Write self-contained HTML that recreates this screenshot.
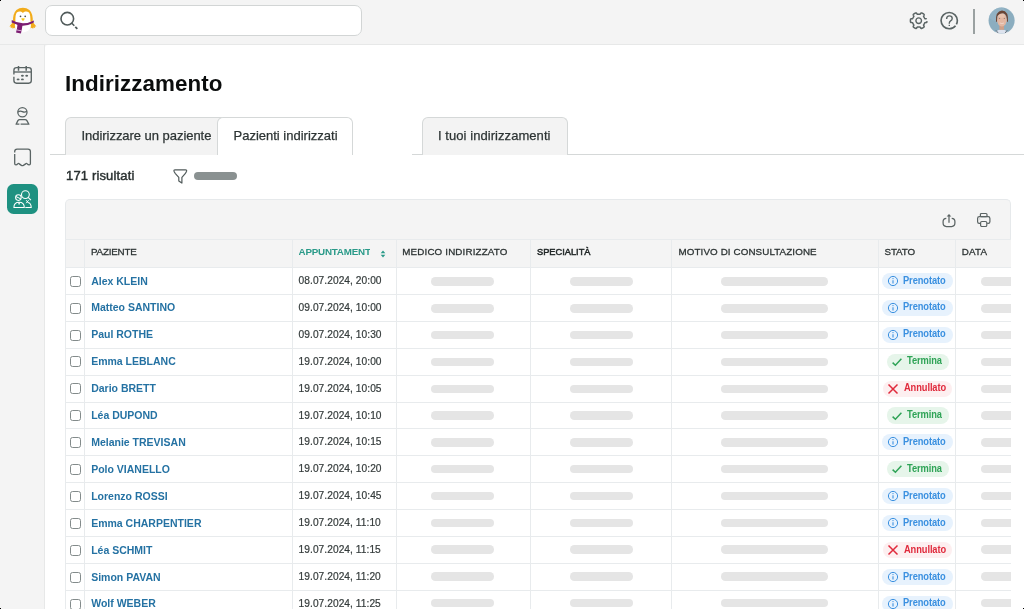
<!DOCTYPE html>
<html><head><meta charset="utf-8"><style>
*{box-sizing:border-box;margin:0;padding:0}
html,body{width:1024px;height:609px;overflow:hidden;background:#f4f4f4;font-family:"Liberation Sans",sans-serif;}
.a{position:absolute}
.t{position:absolute;white-space:nowrap;line-height:1}
</style></head>
<body><div class="a" style="left:0;top:0;width:1024px;height:609px;overflow:hidden;will-change:transform">
<div class="a" style="left:0;top:44px;width:1024px;height:1px;background:#e7e8e8"></div>
<div class="a" style="left:44px;top:44px;width:1px;height:565px;background:#e7e8e8"></div>
<div class="a" style="left:45px;top:45px;width:979px;height:564px;background:#fff;border-top-left-radius:3px"></div>
<svg class="a" style="left:0;top:0" width="46" height="44" viewBox="0 0 46 44">
<path d="M14.2 20.6 L9.4 26.4 L11.0 26.6 L10.6 28.0 L12.4 27.4 L12.6 28.8 L14.2 27.8 L15.2 28.6 L15.8 22.4 Z" fill="#f2ac1b"/>
<path d="M31.6 20.6 L36.4 26.4 L34.8 26.6 L35.2 28.0 L33.4 27.4 L33.2 28.8 L31.6 27.8 L30.6 28.6 L30.0 22.4 Z" fill="#f2ac1b"/>
<ellipse cx="22.9" cy="25.4" rx="8.0" ry="7.0" fill="#fff"/>
<path d="M13.0 21.6 Q12.8 13.4 16.4 10.0 Q19.2 7.8 22.9 7.8 Q26.6 7.8 29.4 10.0 Q33.0 13.4 32.8 21.6 Z" fill="#f2ac1b"/>
<path d="M15.4 23.5 Q15.0 14.6 16.8 12.6 Q18.6 11.2 20.4 11.6 Q22.0 12.0 22.9 13.0 Q23.8 12.0 25.4 11.6 Q27.2 11.2 29.0 12.6 Q30.8 14.6 30.4 23.5 Z" fill="#fff"/>
<circle cx="20.5" cy="16.3" r="0.85" fill="#4a4a4a"/>
<circle cx="25.2" cy="16.3" r="0.85" fill="#4a4a4a"/>
<path d="M21.1 18.6 Q23 17.9 24.9 18.6 Q24.2 20.6 23 20.9 Q21.8 20.6 21.1 18.6 Z" fill="#f5c518"/>
<path d="M11.8 20.0 Q17 23.2 22.9 23.2 Q28.6 23.2 34.0 20.4 L33.6 22.8 Q28.4 25.6 22.9 25.8 Q17.4 25.6 11.6 22.6 Z" fill="#7c1d72"/>
<path d="M17.6 23.6 L22.6 24.4 L21.8 29.4 L20.9 33.6 L16.0 32.4 L17.0 28.6 Z" fill="#7c1d72"/>
<path d="M16.7 29.4 L21.6 30.4 L21.4 31.2 L16.5 30.2 Z" fill="#e9c8e4"/>
</svg>

<div class="a" style="left:45px;top:5px;width:317px;height:31px;border:1px solid #d2d5d5;border-radius:7px;background:#fff"></div>
<svg class="a" style="left:58px;top:10px" width="22" height="22" viewBox="0 0 22 22"><circle cx="9.3" cy="8.7" r="6.3" fill="none" stroke="#505a5a" stroke-width="1.6"/><path d="M13.8 13.3 L16.3 15.8" stroke="#505a5a" stroke-width="1.6"/><path d="M17.3 16.8 L19.3 18.8" stroke="#505a5a" stroke-width="1.8"/></svg>
<div class="t" style="left:65px;top:73.2px;font-size:22.4px;letter-spacing:0.05px;font-weight:700;color:#0b0d0d">Indirizzamento</div>
<div class="a" style="left:49.5px;top:154px;width:168px;height:1px;background:#d5d8d8"></div>
<div class="a" style="left:412px;top:154px;width:612px;height:1px;background:#d5d8d8"></div>
<div class="a" style="left:65px;top:117px;width:162px;height:37.5px;background:#f3f3f3;border:1px solid #d5d8d8;border-bottom:none;border-radius:6px 6px 0 0"></div>
<div class="a" style="left:217px;top:117px;width:136px;height:37.5px;background:#fff;border:1px solid #d5d8d8;border-bottom:none;border-radius:6px 6px 0 0"></div>
<div class="a" style="left:421.5px;top:117px;width:146.5px;height:37.5px;background:#f3f3f3;border:1px solid #d5d8d8;border-bottom:none;border-radius:6px 6px 0 0"></div>
<div class="t" style="left:81.5px;top:128.5px;font-size:13px;color:#2d3434;-webkit-text-stroke:0.25px #2d3434;letter-spacing:-0.04px">Indirizzare un paziente</div>
<div class="t" style="left:233.5px;top:128.5px;font-size:13px;color:#2d3434;-webkit-text-stroke:0.25px #2d3434">Pazienti indirizzati</div>
<div class="t" style="left:438px;top:128.5px;font-size:13px;color:#2d3434;-webkit-text-stroke:0.25px #2d3434;letter-spacing:0.06px">I tuoi indirizzamenti</div>
<div class="t" style="left:66px;top:168.8px;font-size:13px;font-weight:400;color:#2a3131;-webkit-text-stroke:0.45px #2a3131;letter-spacing:0.15px">171 risultati</div>
<svg class="a" style="left:172px;top:168px" width="17" height="17" viewBox="0 0 17 17"><path d="M3 1.9 H13.5 Q14.9 1.9 14.6 3.2 Q14.3 4.3 13.2 5.6 L9.9 9.4 V15.1 L6.8 12.9 V9.4 L3.4 5.6 Q2.3 4.3 2.0 3.2 Q1.7 1.9 3 1.9 Z" fill="none" stroke="#505a5a" stroke-width="1.2" stroke-linejoin="round"/></svg>
<div class="a" style="left:194.2px;top:172px;width:42.8px;height:8px;border-radius:4px;background:#8a9191"></div>
<div class="a" style="left:65px;top:199px;width:946px;height:40.5px;background:#f4f4f4;border:1px solid #e6e9eb;border-bottom:none;border-radius:5px 5px 0 0"></div>
<div class="a" style="left:65px;top:239.5px;width:946px;height:28.0px;background:#f4f4f4"></div>
<svg class="a" style="left:941px;top:212px" width="16" height="16" viewBox="0 0 16 16"><path d="M5.3 6.3 Q2.1 6.5 2.1 9.6 V11.1 Q2.1 14.5 5.4 14.5 H10.6 Q13.9 14.5 13.9 11.1 V9.6 Q13.9 6.5 10.7 6.3" fill="none" stroke="#5a6363" stroke-width="1.25"/><path d="M8 10.8 V3" stroke="#5a6363" stroke-width="1.25"/><path d="M5.7 4.6 L8 2 L10.3 4.6 Z" fill="#5a6363"/></svg>
<svg class="a" style="left:976px;top:212px" width="16" height="16" viewBox="0 0 16 16"><rect x="4.4" y="1.5" width="6.6" height="3.2" rx="1" fill="none" stroke="#5a6363" stroke-width="1.2"/><path d="M4.2 11.3 H3.2 Q1.6 11.3 1.6 9.7 V6.4 Q1.6 4.7 3.4 4.7 H12.1 Q13.9 4.7 13.9 6.4 V9.7 Q13.9 11.3 12.3 11.3 H11.2" fill="none" stroke="#5a6363" stroke-width="1.2"/><rect x="4.6" y="9.5" width="6.2" height="5" rx="1.3" fill="none" stroke="#5a6363" stroke-width="1.2"/><circle cx="3.8" cy="6.9" r="0.45" fill="#5a6363"/></svg>
<div class="a" style="left:65px;top:239.0px;width:946px;height:1px;background:#e8ebed"></div>
<div class="a" style="left:65px;top:267.0px;width:946px;height:1px;background:#e8ebed"></div>
<div class="a" style="left:65px;top:293.91px;width:946px;height:1px;background:#e8ebed"></div>
<div class="a" style="left:65px;top:320.82px;width:946px;height:1px;background:#e8ebed"></div>
<div class="a" style="left:65px;top:347.73px;width:946px;height:1px;background:#e8ebed"></div>
<div class="a" style="left:65px;top:374.64px;width:946px;height:1px;background:#e8ebed"></div>
<div class="a" style="left:65px;top:401.55px;width:946px;height:1px;background:#e8ebed"></div>
<div class="a" style="left:65px;top:428.46px;width:946px;height:1px;background:#e8ebed"></div>
<div class="a" style="left:65px;top:455.37px;width:946px;height:1px;background:#e8ebed"></div>
<div class="a" style="left:65px;top:482.28px;width:946px;height:1px;background:#e8ebed"></div>
<div class="a" style="left:65px;top:509.19px;width:946px;height:1px;background:#e8ebed"></div>
<div class="a" style="left:65px;top:536.10px;width:946px;height:1px;background:#e8ebed"></div>
<div class="a" style="left:65px;top:563.01px;width:946px;height:1px;background:#e8ebed"></div>
<div class="a" style="left:65px;top:589.92px;width:946px;height:1px;background:#e8ebed"></div>
<div class="a" style="left:65px;top:239.5px;width:1px;height:369.5px;background:#e8ebed"></div>
<div class="a" style="left:84px;top:239.5px;width:1px;height:369.5px;background:#e8ebed"></div>
<div class="a" style="left:292px;top:239.5px;width:1px;height:369.5px;background:#e8ebed"></div>
<div class="a" style="left:396px;top:239.5px;width:1px;height:369.5px;background:#e8ebed"></div>
<div class="a" style="left:530px;top:239.5px;width:1px;height:369.5px;background:#e8ebed"></div>
<div class="a" style="left:671px;top:239.5px;width:1px;height:369.5px;background:#e8ebed"></div>
<div class="a" style="left:878px;top:239.5px;width:1px;height:369.5px;background:#e8ebed"></div>
<div class="a" style="left:955px;top:239.5px;width:1px;height:369.5px;background:#e8ebed"></div>
<div class="t" style="left:91.0px;top:247.4px;font-size:9.8px;color:#2c3333;-webkit-text-stroke:0.28px #2c3333;letter-spacing:-0.2px">PAZIENTE</div>
<div class="a" style="left:298.5px;top:245.4px;width:71.6px;height:13px;overflow:hidden"><div class="t" style="left:0;top:1.6px;font-size:9.8px;font-weight:700;color:#2a9a89;letter-spacing:-0.2px">APPUNTAMENTO</div></div>
<svg class="a" style="left:380px;top:249.6px" width="6" height="8" viewBox="0 0 6 8"><path d="M0.7 3.2 L3 0.6 L5.3 3.2 Z M0.7 4.8 L3 7.4 L5.3 4.8 Z" fill="#2a9a89"/></svg>
<div class="t" style="left:402.3px;top:247.4px;font-size:9.8px;color:#2c3333;-webkit-text-stroke:0.28px #2c3333;letter-spacing:0.15px">MEDICO INDIRIZZATO</div>
<div class="t" style="left:537.0px;top:247.4px;font-size:9.8px;color:#2c3333;-webkit-text-stroke:0.28px #2c3333;color:#1e2424;-webkit-text-stroke:0.5px #1e2424;letter-spacing:0px;transform:scaleX(0.945);transform-origin:0 0">SPECIALITÀ</div>
<div class="t" style="left:678.5px;top:247.4px;font-size:9.8px;color:#2c3333;-webkit-text-stroke:0.28px #2c3333;letter-spacing:0.11px">MOTIVO DI CONSULTAZIONE</div>
<div class="t" style="left:884.5px;top:247.4px;font-size:9.8px;color:#2c3333;-webkit-text-stroke:0.28px #2c3333;letter-spacing:-0.1px">STATO</div>
<div class="t" style="left:961.8px;top:247.4px;font-size:9.8px;color:#2c3333;-webkit-text-stroke:0.28px #2c3333;letter-spacing:0.17px">DATA</div>
<div class="a" style="left:70.1px;top:275.76px;width:11px;height:11px;border:1.25px solid #838b8b;border-radius:2.6px;background:#fff"></div>
<div class="t" style="left:91.2px;top:275.56px;font-size:10.5px;font-weight:700;color:#2572a3">Alex KLEIN</div>
<div class="t" style="left:298.6px;top:275.96px;font-size:10.2px;letter-spacing:0.05px;color:#343b3b;-webkit-text-stroke:0.2px #343b3b">08.07.2024, 20:00</div>
<div class="a" style="left:431.3px;top:277.41px;width:63.0px;height:8.5px;border-radius:4.25px;background:#e5e5e5"></div>
<div class="a" style="left:569.9px;top:277.41px;width:63.3px;height:8.5px;border-radius:4.25px;background:#e5e5e5"></div>
<div class="a" style="left:721.1px;top:277.41px;width:106.5px;height:8.5px;border-radius:4.25px;background:#e5e5e5"></div>
<div class="a" style="left:981px;top:277.41px;width:30px;height:8.5px;border-radius:4.25px 0 0 4.25px;background:#e5e5e5"></div>
<div class="a" style="left:882.3px;top:272.86px;width:70.4px;height:16.2px;border-radius:8.1px;background:#e7f2fd"></div>
<svg class="a" style="left:886.6px;top:274.96px" width="12" height="12" viewBox="0 0 12 12"><circle cx="6" cy="6" r="4.6" fill="none" stroke="#3a90e0" stroke-width="1"/><path d="M6 5.2 V8.6" stroke="#3a90e0" stroke-width="1.1"/><circle cx="6" cy="3.6" r="0.65" fill="#3a90e0"/></svg>
<div class="t" style="left:903.3px;top:275.56px;font-size:10px;font-weight:700;color:#3a90e0;letter-spacing:-0.1px;transform:scaleX(0.93);transform-origin:0 0">Prenotato</div>
<div class="a" style="left:70.1px;top:302.67px;width:11px;height:11px;border:1.25px solid #838b8b;border-radius:2.6px;background:#fff"></div>
<div class="t" style="left:91.2px;top:302.47px;font-size:10.5px;font-weight:700;color:#2572a3">Matteo SANTINO</div>
<div class="t" style="left:298.6px;top:302.87px;font-size:10.2px;letter-spacing:0.05px;color:#343b3b;-webkit-text-stroke:0.2px #343b3b">09.07.2024, 10:00</div>
<div class="a" style="left:431.3px;top:304.19px;width:63.0px;height:8.5px;border-radius:4.25px;background:#e5e5e5"></div>
<div class="a" style="left:569.9px;top:304.19px;width:63.3px;height:8.5px;border-radius:4.25px;background:#e5e5e5"></div>
<div class="a" style="left:721.1px;top:304.19px;width:106.5px;height:8.5px;border-radius:4.25px;background:#e5e5e5"></div>
<div class="a" style="left:981px;top:304.19px;width:30px;height:8.5px;border-radius:4.25px 0 0 4.25px;background:#e5e5e5"></div>
<div class="a" style="left:882.3px;top:299.76px;width:70.4px;height:16.2px;border-radius:8.1px;background:#e7f2fd"></div>
<svg class="a" style="left:886.6px;top:301.87px" width="12" height="12" viewBox="0 0 12 12"><circle cx="6" cy="6" r="4.6" fill="none" stroke="#3a90e0" stroke-width="1"/><path d="M6 5.2 V8.6" stroke="#3a90e0" stroke-width="1.1"/><circle cx="6" cy="3.6" r="0.65" fill="#3a90e0"/></svg>
<div class="t" style="left:903.3px;top:302.47px;font-size:10px;font-weight:700;color:#3a90e0;letter-spacing:-0.1px;transform:scaleX(0.93);transform-origin:0 0">Prenotato</div>
<div class="a" style="left:70.1px;top:329.57px;width:11px;height:11px;border:1.25px solid #838b8b;border-radius:2.6px;background:#fff"></div>
<div class="t" style="left:91.2px;top:329.38px;font-size:10.5px;font-weight:700;color:#2572a3">Paul ROTHE</div>
<div class="t" style="left:298.6px;top:329.77px;font-size:10.2px;letter-spacing:0.05px;color:#343b3b;-webkit-text-stroke:0.2px #343b3b">09.07.2024, 10:30</div>
<div class="a" style="left:431.3px;top:330.98px;width:63.0px;height:8.5px;border-radius:4.25px;background:#e5e5e5"></div>
<div class="a" style="left:569.9px;top:330.98px;width:63.3px;height:8.5px;border-radius:4.25px;background:#e5e5e5"></div>
<div class="a" style="left:721.1px;top:330.98px;width:106.5px;height:8.5px;border-radius:4.25px;background:#e5e5e5"></div>
<div class="a" style="left:981px;top:330.98px;width:30px;height:8.5px;border-radius:4.25px 0 0 4.25px;background:#e5e5e5"></div>
<div class="a" style="left:882.3px;top:326.67px;width:70.4px;height:16.2px;border-radius:8.1px;background:#e7f2fd"></div>
<svg class="a" style="left:886.6px;top:328.77px" width="12" height="12" viewBox="0 0 12 12"><circle cx="6" cy="6" r="4.6" fill="none" stroke="#3a90e0" stroke-width="1"/><path d="M6 5.2 V8.6" stroke="#3a90e0" stroke-width="1.1"/><circle cx="6" cy="3.6" r="0.65" fill="#3a90e0"/></svg>
<div class="t" style="left:903.3px;top:329.38px;font-size:10px;font-weight:700;color:#3a90e0;letter-spacing:-0.1px;transform:scaleX(0.93);transform-origin:0 0">Prenotato</div>
<div class="a" style="left:70.1px;top:356.49px;width:11px;height:11px;border:1.25px solid #838b8b;border-radius:2.6px;background:#fff"></div>
<div class="t" style="left:91.2px;top:356.29px;font-size:10.5px;font-weight:700;color:#2572a3">Emma LEBLANC</div>
<div class="t" style="left:298.6px;top:356.69px;font-size:10.2px;letter-spacing:0.05px;color:#343b3b;-webkit-text-stroke:0.2px #343b3b">19.07.2024, 10:00</div>
<div class="a" style="left:431.3px;top:357.77px;width:63.0px;height:8.5px;border-radius:4.25px;background:#e5e5e5"></div>
<div class="a" style="left:569.9px;top:357.77px;width:63.3px;height:8.5px;border-radius:4.25px;background:#e5e5e5"></div>
<div class="a" style="left:721.1px;top:357.77px;width:106.5px;height:8.5px;border-radius:4.25px;background:#e5e5e5"></div>
<div class="a" style="left:981px;top:357.77px;width:30px;height:8.5px;border-radius:4.25px 0 0 4.25px;background:#e5e5e5"></div>
<div class="a" style="left:886.6px;top:353.58px;width:62.3px;height:16.2px;border-radius:8.1px;background:#e6f5ea"></div>
<svg class="a" style="left:891px;top:355.69px" width="12" height="12" viewBox="0 0 12 12"><path d="M1.6 6.6 L4.4 9.2 L10.4 2.8" fill="none" stroke="#2ea356" stroke-width="1.5"/></svg>
<div class="t" style="left:907.2px;top:356.29px;font-size:10px;font-weight:700;color:#2ea356;letter-spacing:-0.1px;transform:scaleX(0.93);transform-origin:0 0">Termina</div>
<div class="a" style="left:70.1px;top:383.40px;width:11px;height:11px;border:1.25px solid #838b8b;border-radius:2.6px;background:#fff"></div>
<div class="t" style="left:91.2px;top:383.20px;font-size:10.5px;font-weight:700;color:#2572a3">Dario BRETT</div>
<div class="t" style="left:298.6px;top:383.60px;font-size:10.2px;letter-spacing:0.05px;color:#343b3b;-webkit-text-stroke:0.2px #343b3b">19.07.2024, 10:05</div>
<div class="a" style="left:431.3px;top:384.57px;width:63.0px;height:8.5px;border-radius:4.25px;background:#e5e5e5"></div>
<div class="a" style="left:569.9px;top:384.57px;width:63.3px;height:8.5px;border-radius:4.25px;background:#e5e5e5"></div>
<div class="a" style="left:721.1px;top:384.57px;width:106.5px;height:8.5px;border-radius:4.25px;background:#e5e5e5"></div>
<div class="a" style="left:981px;top:384.57px;width:30px;height:8.5px;border-radius:4.25px 0 0 4.25px;background:#e5e5e5"></div>
<div class="a" style="left:883px;top:380.50px;width:69px;height:16.2px;border-radius:8.1px;background:#fdeff0"></div>
<svg class="a" style="left:887px;top:382.60px" width="12" height="12" viewBox="0 0 12 12"><path d="M1.5 1.5 L10.5 10.5 M10.5 1.5 L1.5 10.5" fill="none" stroke="#e02a3c" stroke-width="1.5"/></svg>
<div class="t" style="left:903.6px;top:383.20px;font-size:10px;font-weight:700;color:#e02a3c;letter-spacing:-0.1px;transform:scaleX(0.93);transform-origin:0 0">Annullato</div>
<div class="a" style="left:70.1px;top:410.31px;width:11px;height:11px;border:1.25px solid #838b8b;border-radius:2.6px;background:#fff"></div>
<div class="t" style="left:91.2px;top:410.11px;font-size:10.5px;font-weight:700;color:#2572a3">Léa DUPOND</div>
<div class="t" style="left:298.6px;top:410.50px;font-size:10.2px;letter-spacing:0.05px;color:#343b3b;-webkit-text-stroke:0.2px #343b3b">19.07.2024, 10:10</div>
<div class="a" style="left:431.3px;top:411.36px;width:63.0px;height:8.5px;border-radius:4.25px;background:#e5e5e5"></div>
<div class="a" style="left:569.9px;top:411.36px;width:63.3px;height:8.5px;border-radius:4.25px;background:#e5e5e5"></div>
<div class="a" style="left:721.1px;top:411.36px;width:106.5px;height:8.5px;border-radius:4.25px;background:#e5e5e5"></div>
<div class="a" style="left:981px;top:411.36px;width:30px;height:8.5px;border-radius:4.25px 0 0 4.25px;background:#e5e5e5"></div>
<div class="a" style="left:886.6px;top:407.40px;width:62.3px;height:16.2px;border-radius:8.1px;background:#e6f5ea"></div>
<svg class="a" style="left:891px;top:409.50px" width="12" height="12" viewBox="0 0 12 12"><path d="M1.6 6.6 L4.4 9.2 L10.4 2.8" fill="none" stroke="#2ea356" stroke-width="1.5"/></svg>
<div class="t" style="left:907.2px;top:410.11px;font-size:10px;font-weight:700;color:#2ea356;letter-spacing:-0.1px;transform:scaleX(0.93);transform-origin:0 0">Termina</div>
<div class="a" style="left:70.1px;top:437.22px;width:11px;height:11px;border:1.25px solid #838b8b;border-radius:2.6px;background:#fff"></div>
<div class="t" style="left:91.2px;top:437.02px;font-size:10.5px;font-weight:700;color:#2572a3">Melanie TREVISAN</div>
<div class="t" style="left:298.6px;top:437.42px;font-size:10.2px;letter-spacing:0.05px;color:#343b3b;-webkit-text-stroke:0.2px #343b3b">19.07.2024, 10:15</div>
<div class="a" style="left:431.3px;top:438.15px;width:63.0px;height:8.5px;border-radius:4.25px;background:#e5e5e5"></div>
<div class="a" style="left:569.9px;top:438.15px;width:63.3px;height:8.5px;border-radius:4.25px;background:#e5e5e5"></div>
<div class="a" style="left:721.1px;top:438.15px;width:106.5px;height:8.5px;border-radius:4.25px;background:#e5e5e5"></div>
<div class="a" style="left:981px;top:438.15px;width:30px;height:8.5px;border-radius:4.25px 0 0 4.25px;background:#e5e5e5"></div>
<div class="a" style="left:882.3px;top:434.31px;width:70.4px;height:16.2px;border-radius:8.1px;background:#e7f2fd"></div>
<svg class="a" style="left:886.6px;top:436.42px" width="12" height="12" viewBox="0 0 12 12"><circle cx="6" cy="6" r="4.6" fill="none" stroke="#3a90e0" stroke-width="1"/><path d="M6 5.2 V8.6" stroke="#3a90e0" stroke-width="1.1"/><circle cx="6" cy="3.6" r="0.65" fill="#3a90e0"/></svg>
<div class="t" style="left:903.3px;top:437.02px;font-size:10px;font-weight:700;color:#3a90e0;letter-spacing:-0.1px;transform:scaleX(0.93);transform-origin:0 0">Prenotato</div>
<div class="a" style="left:70.1px;top:464.12px;width:11px;height:11px;border:1.25px solid #838b8b;border-radius:2.6px;background:#fff"></div>
<div class="t" style="left:91.2px;top:463.93px;font-size:10.5px;font-weight:700;color:#2572a3">Polo VIANELLO</div>
<div class="t" style="left:298.6px;top:464.32px;font-size:10.2px;letter-spacing:0.05px;color:#343b3b;-webkit-text-stroke:0.2px #343b3b">19.07.2024, 10:20</div>
<div class="a" style="left:431.3px;top:464.94px;width:63.0px;height:8.5px;border-radius:4.25px;background:#e5e5e5"></div>
<div class="a" style="left:569.9px;top:464.94px;width:63.3px;height:8.5px;border-radius:4.25px;background:#e5e5e5"></div>
<div class="a" style="left:721.1px;top:464.94px;width:106.5px;height:8.5px;border-radius:4.25px;background:#e5e5e5"></div>
<div class="a" style="left:981px;top:464.94px;width:30px;height:8.5px;border-radius:4.25px 0 0 4.25px;background:#e5e5e5"></div>
<div class="a" style="left:886.6px;top:461.22px;width:62.3px;height:16.2px;border-radius:8.1px;background:#e6f5ea"></div>
<svg class="a" style="left:891px;top:463.32px" width="12" height="12" viewBox="0 0 12 12"><path d="M1.6 6.6 L4.4 9.2 L10.4 2.8" fill="none" stroke="#2ea356" stroke-width="1.5"/></svg>
<div class="t" style="left:907.2px;top:463.93px;font-size:10px;font-weight:700;color:#2ea356;letter-spacing:-0.1px;transform:scaleX(0.93);transform-origin:0 0">Termina</div>
<div class="a" style="left:70.1px;top:491.04px;width:11px;height:11px;border:1.25px solid #838b8b;border-radius:2.6px;background:#fff"></div>
<div class="t" style="left:91.2px;top:490.84px;font-size:10.5px;font-weight:700;color:#2572a3">Lorenzo ROSSI</div>
<div class="t" style="left:298.6px;top:491.24px;font-size:10.2px;letter-spacing:0.05px;color:#343b3b;-webkit-text-stroke:0.2px #343b3b">19.07.2024, 10:45</div>
<div class="a" style="left:431.3px;top:491.73px;width:63.0px;height:8.5px;border-radius:4.25px;background:#e5e5e5"></div>
<div class="a" style="left:569.9px;top:491.73px;width:63.3px;height:8.5px;border-radius:4.25px;background:#e5e5e5"></div>
<div class="a" style="left:721.1px;top:491.73px;width:106.5px;height:8.5px;border-radius:4.25px;background:#e5e5e5"></div>
<div class="a" style="left:981px;top:491.73px;width:30px;height:8.5px;border-radius:4.25px 0 0 4.25px;background:#e5e5e5"></div>
<div class="a" style="left:882.3px;top:488.13px;width:70.4px;height:16.2px;border-radius:8.1px;background:#e7f2fd"></div>
<svg class="a" style="left:886.6px;top:490.24px" width="12" height="12" viewBox="0 0 12 12"><circle cx="6" cy="6" r="4.6" fill="none" stroke="#3a90e0" stroke-width="1"/><path d="M6 5.2 V8.6" stroke="#3a90e0" stroke-width="1.1"/><circle cx="6" cy="3.6" r="0.65" fill="#3a90e0"/></svg>
<div class="t" style="left:903.3px;top:490.84px;font-size:10px;font-weight:700;color:#3a90e0;letter-spacing:-0.1px;transform:scaleX(0.93);transform-origin:0 0">Prenotato</div>
<div class="a" style="left:70.1px;top:517.94px;width:11px;height:11px;border:1.25px solid #838b8b;border-radius:2.6px;background:#fff"></div>
<div class="t" style="left:91.2px;top:517.75px;font-size:10.5px;font-weight:700;color:#2572a3">Emma CHARPENTIER</div>
<div class="t" style="left:298.6px;top:518.14px;font-size:10.2px;letter-spacing:0.05px;color:#343b3b;-webkit-text-stroke:0.2px #343b3b">19.07.2024, 11:10</div>
<div class="a" style="left:431.3px;top:518.51px;width:63.0px;height:8.5px;border-radius:4.25px;background:#e5e5e5"></div>
<div class="a" style="left:569.9px;top:518.51px;width:63.3px;height:8.5px;border-radius:4.25px;background:#e5e5e5"></div>
<div class="a" style="left:721.1px;top:518.51px;width:106.5px;height:8.5px;border-radius:4.25px;background:#e5e5e5"></div>
<div class="a" style="left:981px;top:518.51px;width:30px;height:8.5px;border-radius:4.25px 0 0 4.25px;background:#e5e5e5"></div>
<div class="a" style="left:882.3px;top:515.04px;width:70.4px;height:16.2px;border-radius:8.1px;background:#e7f2fd"></div>
<svg class="a" style="left:886.6px;top:517.14px" width="12" height="12" viewBox="0 0 12 12"><circle cx="6" cy="6" r="4.6" fill="none" stroke="#3a90e0" stroke-width="1"/><path d="M6 5.2 V8.6" stroke="#3a90e0" stroke-width="1.1"/><circle cx="6" cy="3.6" r="0.65" fill="#3a90e0"/></svg>
<div class="t" style="left:903.3px;top:517.75px;font-size:10px;font-weight:700;color:#3a90e0;letter-spacing:-0.1px;transform:scaleX(0.93);transform-origin:0 0">Prenotato</div>
<div class="a" style="left:70.1px;top:544.86px;width:11px;height:11px;border:1.25px solid #838b8b;border-radius:2.6px;background:#fff"></div>
<div class="t" style="left:91.2px;top:544.66px;font-size:10.5px;font-weight:700;color:#2572a3">Léa SCHMIT</div>
<div class="t" style="left:298.6px;top:545.06px;font-size:10.2px;letter-spacing:0.05px;color:#343b3b;-webkit-text-stroke:0.2px #343b3b">19.07.2024, 11:15</div>
<div class="a" style="left:431.3px;top:545.31px;width:63.0px;height:8.5px;border-radius:4.25px;background:#e5e5e5"></div>
<div class="a" style="left:569.9px;top:545.31px;width:63.3px;height:8.5px;border-radius:4.25px;background:#e5e5e5"></div>
<div class="a" style="left:721.1px;top:545.31px;width:106.5px;height:8.5px;border-radius:4.25px;background:#e5e5e5"></div>
<div class="a" style="left:981px;top:545.31px;width:30px;height:8.5px;border-radius:4.25px 0 0 4.25px;background:#e5e5e5"></div>
<div class="a" style="left:883px;top:541.96px;width:69px;height:16.2px;border-radius:8.1px;background:#fdeff0"></div>
<svg class="a" style="left:887px;top:544.06px" width="12" height="12" viewBox="0 0 12 12"><path d="M1.5 1.5 L10.5 10.5 M10.5 1.5 L1.5 10.5" fill="none" stroke="#e02a3c" stroke-width="1.5"/></svg>
<div class="t" style="left:903.6px;top:544.66px;font-size:10px;font-weight:700;color:#e02a3c;letter-spacing:-0.1px;transform:scaleX(0.93);transform-origin:0 0">Annullato</div>
<div class="a" style="left:70.1px;top:571.76px;width:11px;height:11px;border:1.25px solid #838b8b;border-radius:2.6px;background:#fff"></div>
<div class="t" style="left:91.2px;top:571.57px;font-size:10.5px;font-weight:700;color:#2572a3">Simon PAVAN</div>
<div class="t" style="left:298.6px;top:571.97px;font-size:10.2px;letter-spacing:0.05px;color:#343b3b;-webkit-text-stroke:0.2px #343b3b">19.07.2024, 11:20</div>
<div class="a" style="left:431.3px;top:572.1px;width:63.0px;height:8.5px;border-radius:4.25px;background:#e5e5e5"></div>
<div class="a" style="left:569.9px;top:572.1px;width:63.3px;height:8.5px;border-radius:4.25px;background:#e5e5e5"></div>
<div class="a" style="left:721.1px;top:572.1px;width:106.5px;height:8.5px;border-radius:4.25px;background:#e5e5e5"></div>
<div class="a" style="left:981px;top:572.10px;width:30px;height:8.5px;border-radius:4.25px 0 0 4.25px;background:#e5e5e5"></div>
<div class="a" style="left:882.3px;top:568.87px;width:70.4px;height:16.2px;border-radius:8.1px;background:#e7f2fd"></div>
<svg class="a" style="left:886.6px;top:570.97px" width="12" height="12" viewBox="0 0 12 12"><circle cx="6" cy="6" r="4.6" fill="none" stroke="#3a90e0" stroke-width="1"/><path d="M6 5.2 V8.6" stroke="#3a90e0" stroke-width="1.1"/><circle cx="6" cy="3.6" r="0.65" fill="#3a90e0"/></svg>
<div class="t" style="left:903.3px;top:571.57px;font-size:10px;font-weight:700;color:#3a90e0;letter-spacing:-0.1px;transform:scaleX(0.93);transform-origin:0 0">Prenotato</div>
<div class="a" style="left:70.1px;top:598.67px;width:11px;height:11px;border:1.25px solid #838b8b;border-radius:2.6px;background:#fff"></div>
<div class="t" style="left:91.2px;top:598.48px;font-size:10.5px;font-weight:700;color:#2572a3">Wolf WEBER</div>
<div class="t" style="left:298.6px;top:598.88px;font-size:10.2px;letter-spacing:0.05px;color:#343b3b;-webkit-text-stroke:0.2px #343b3b">19.07.2024, 11:25</div>
<div class="a" style="left:431.3px;top:598.88px;width:63.0px;height:8.5px;border-radius:4.25px;background:#e5e5e5"></div>
<div class="a" style="left:569.9px;top:598.88px;width:63.3px;height:8.5px;border-radius:4.25px;background:#e5e5e5"></div>
<div class="a" style="left:721.1px;top:598.88px;width:106.5px;height:8.5px;border-radius:4.25px;background:#e5e5e5"></div>
<div class="a" style="left:981px;top:598.88px;width:30px;height:8.5px;border-radius:4.25px 0 0 4.25px;background:#e5e5e5"></div>
<div class="a" style="left:882.3px;top:595.77px;width:70.4px;height:16.2px;border-radius:8.1px;background:#e7f2fd"></div>
<svg class="a" style="left:886.6px;top:597.88px" width="12" height="12" viewBox="0 0 12 12"><circle cx="6" cy="6" r="4.6" fill="none" stroke="#3a90e0" stroke-width="1"/><path d="M6 5.2 V8.6" stroke="#3a90e0" stroke-width="1.1"/><circle cx="6" cy="3.6" r="0.65" fill="#3a90e0"/></svg>
<div class="t" style="left:903.3px;top:598.48px;font-size:10px;font-weight:700;color:#3a90e0;letter-spacing:-0.1px;transform:scaleX(0.93);transform-origin:0 0">Prenotato</div>
<svg class="a" style="left:0;top:50px" width="44" height="44" viewBox="0 50 44 44">
<path d="M13.9 74.6 V70.2 Q13.9 67.6 16.5 67.6 H28.7 Q31.3 67.6 31.3 70.2 V80.6 Q31.3 83.2 28.7 83.2 H16.5 Q13.9 83.2 13.9 80.6 V76.8" fill="none" stroke="#5a6464" stroke-width="1.35"/>
<path d="M14 72 H31.2" stroke="#5a6464" stroke-width="1.35"/>
<path d="M18.5 66 V70.8 M26.2 66 V70.8" stroke="#5a6464" stroke-width="1.5"/>
<ellipse cx="22.4" cy="75.7" rx="1.45" ry="0.95" fill="#5a6464"/><ellipse cx="26.7" cy="75.7" rx="1.45" ry="0.95" fill="#5a6464"/>
<ellipse cx="18.1" cy="79.4" rx="1.45" ry="0.95" fill="#5a6464"/><ellipse cx="22.4" cy="79.4" rx="1.45" ry="0.95" fill="#5a6464"/>
</svg>
<svg class="a" style="left:0;top:100px" width="44" height="30" viewBox="0 100 44 30">
<circle cx="22.4" cy="112.2" r="4.6" fill="none" stroke="#5a6464" stroke-width="1.3"/>
<path d="M18 111.9 Q20.2 110.4 22.4 111.6 Q24.6 112.8 26.8 111.3" fill="none" stroke="#5a6464" stroke-width="1.2"/>
<path d="M19.4 124.2 H16.1 L17.9 120.6 Q18.5 119.6 19.7 119.6 H25.1 Q26.3 119.6 26.9 120.6 L28.9 124.2 H20.6" fill="none" stroke="#5a6464" stroke-width="1.3" stroke-linejoin="round"/>
</svg>
<svg class="a" style="left:0;top:140px" width="44" height="30" viewBox="0 140 44 30">
<path d="M14.7 152.6 V151.6 Q14.7 149.2 17.1 149.2 H28 Q30.4 149.2 30.4 151.6 V163.6 Q30.4 164.9 29.2 164.9 Q28 164.9 27.2 163.9 Q26.4 163 25.6 163.9 L23.4 165.4 Q22.4 166 21.4 165.4 L19.3 163.9 Q18.5 163 17.7 163.9 Q16.9 164.9 15.9 164.9 Q14.7 164.9 14.7 163.6 V154" fill="none" stroke="#5a6464" stroke-width="1.3"/>
</svg>
<div class="a" style="left:7.4px;top:183.7px;width:30.4px;height:30.4px;border-radius:6.5px;background:#1e9181"></div>
<svg class="a" style="left:0;top:180px" width="44" height="40" viewBox="0 180 44 40">
<circle cx="25.4" cy="194.6" r="3.9" fill="none" stroke="#ffffff" stroke-width="1.05"/>
<path d="M28.2 197.4 L30.9 200.2" stroke="#ffffff" stroke-width="1.1"/>
<circle cx="18.4" cy="197.6" r="2.8" fill="none" stroke="#ffffff" stroke-width="1.05"/>
<path d="M16 196.6 L20.6 198.8" stroke="#ffffff" stroke-width="1"/>
<path d="M13.9 207.4 Q13.9 202.2 19.1 202.2 Q24.3 202.2 24.3 207.4 Z" fill="none" stroke="#ffffff" stroke-width="1.05" stroke-linejoin="round"/>
<path d="M18.6 202.4 L19.1 204.4 L19.6 202.4" fill="none" stroke="#ffffff" stroke-width="0.9"/>
<path d="M25.3 207.4 H31.2 Q31.2 203.6 28.3 202.6" fill="none" stroke="#ffffff" stroke-width="1.05"/>
<path d="M26.2 200.2 L28.6 203.2 M28.6 200.2 L26.2 203.2" stroke="#ffffff" stroke-width="1"/>
</svg>
<div class="a" style="left:0px;top:0px;width:1px;height:1px;background:#000"></div>
<div class="a" style="left:1023px;top:0px;width:1px;height:1px;background:#000"></div>
<div class="a" style="left:0px;top:608px;width:1px;height:1px;background:#000"></div>
<div class="a" style="left:1023px;top:608px;width:1px;height:1px;background:#000"></div>
<svg class="a" style="left:900px;top:2px" width="40" height="38" viewBox="-18.7 -18.7 40 38">
<path d="M7.97 -1.70 L8.03 -1.63 L8.08 -1.57 L8.11 -1.50 L8.14 -1.44 L8.16 -1.37 L8.18 -1.30 L8.20 -1.23 L8.21 -1.15 L8.22 -1.08 L8.23 -1.01 L8.24 -0.94 L8.25 -0.87 L8.26 -0.80 L8.27 -0.72 L8.27 -0.65 L8.28 -0.58 L8.28 -0.51 L8.29 -0.43 L8.29 -0.36 L8.29 -0.29 L8.30 -0.22 L8.30 -0.14 L8.30 -0.07 L8.30 0.00 L8.30 0.07 L8.30 0.14 L8.30 0.22 L8.29 0.29 L8.29 0.36 L8.29 0.43 L8.28 0.51 L8.28 0.58 L8.27 0.65 L8.27 0.72 L8.26 0.80 L8.25 0.87 L8.24 0.94 L8.23 1.01 L8.22 1.08 L8.21 1.15 L8.20 1.23 L8.18 1.30 L8.16 1.37 L8.14 1.44 L8.11 1.50 L8.08 1.57 L8.03 1.63 L7.97 1.70 L7.90 1.75 L7.79 1.80 L7.66 1.84 L7.50 1.87 L7.31 1.89 L7.10 1.90 L6.89 1.91 L6.70 1.92 L6.54 1.94 L6.41 1.96 L6.31 1.99 L6.23 2.02 L6.17 2.06 L6.12 2.11 L6.08 2.15 L6.05 2.20 L6.02 2.25 L5.99 2.30 L5.97 2.35 L5.94 2.40 L5.92 2.45 L5.90 2.50 L5.87 2.55 L5.85 2.60 L5.83 2.65 L5.80 2.71 L5.78 2.76 L5.75 2.81 L5.73 2.86 L5.70 2.91 L5.68 2.96 L5.65 3.00 L5.62 3.05 L5.60 3.10 L5.57 3.15 L5.54 3.20 L5.51 3.25 L5.49 3.30 L5.46 3.34 L5.43 3.39 L5.40 3.44 L5.37 3.49 L5.34 3.53 L5.31 3.58 L5.28 3.63 L5.24 3.67 L5.21 3.72 L5.18 3.76 L5.15 3.81 L5.11 3.85 L5.08 3.90 L5.05 3.95 L5.02 3.99 L4.99 4.04 L4.96 4.09 L4.93 4.14 L4.90 4.19 L4.88 4.24 L4.87 4.31 L4.87 4.38 L4.88 4.47 L4.90 4.57 L4.95 4.70 L5.02 4.84 L5.10 5.01 L5.20 5.20 L5.29 5.38 L5.37 5.56 L5.42 5.71 L5.45 5.85 L5.46 5.96 L5.46 6.06 L5.43 6.14 L5.40 6.21 L5.36 6.27 L5.31 6.33 L5.26 6.39 L5.21 6.44 L5.16 6.49 L5.10 6.53 L5.05 6.58 L4.99 6.63 L4.94 6.67 L4.88 6.71 L4.82 6.76 L4.76 6.80 L4.70 6.84 L4.64 6.88 L4.58 6.92 L4.52 6.96 L4.46 7.00 L4.40 7.04 L4.34 7.08 L4.27 7.11 L4.21 7.15 L4.15 7.19 L4.09 7.22 L4.02 7.26 L3.96 7.29 L3.90 7.33 L3.83 7.36 L3.77 7.40 L3.70 7.43 L3.64 7.46 L3.57 7.49 L3.51 7.52 L3.44 7.55 L3.37 7.58 L3.31 7.61 L3.24 7.64 L3.17 7.66 L3.11 7.69 L3.04 7.71 L2.97 7.73 L2.90 7.75 L2.83 7.77 L2.75 7.78 L2.68 7.78 L2.60 7.77 L2.52 7.75 L2.43 7.71 L2.34 7.65 L2.24 7.55 L2.13 7.43 L2.02 7.27 L1.90 7.10 L1.79 6.93 L1.69 6.77 L1.59 6.63 L1.51 6.53 L1.43 6.46 L1.36 6.40 L1.30 6.37 L1.23 6.35 L1.18 6.34 L1.12 6.34 L1.06 6.34 L1.00 6.34 L0.95 6.34 L0.89 6.35 L0.84 6.35 L0.78 6.36 L0.72 6.36 L0.67 6.37 L0.61 6.37 L0.56 6.38 L0.50 6.38 L0.45 6.39 L0.39 6.39 L0.33 6.39 L0.28 6.39 L0.22 6.40 L0.17 6.40 L0.11 6.40 L0.06 6.40 L0.00 6.40 L-0.06 6.40 L-0.11 6.40 L-0.17 6.40 L-0.22 6.40 L-0.28 6.39 L-0.33 6.39 L-0.39 6.39 L-0.45 6.39 L-0.50 6.38 L-0.56 6.38 L-0.61 6.37 L-0.67 6.37 L-0.72 6.36 L-0.78 6.36 L-0.84 6.35 L-0.89 6.35 L-0.95 6.34 L-1.00 6.34 L-1.06 6.34 L-1.12 6.34 L-1.18 6.34 L-1.23 6.35 L-1.30 6.37 L-1.36 6.40 L-1.43 6.46 L-1.51 6.53 L-1.59 6.63 L-1.69 6.77 L-1.79 6.93 L-1.90 7.10 L-2.02 7.27 L-2.13 7.43 L-2.24 7.55 L-2.34 7.65 L-2.43 7.71 L-2.52 7.75 L-2.60 7.77 L-2.68 7.78 L-2.75 7.78 L-2.83 7.77 L-2.90 7.75 L-2.97 7.73 L-3.04 7.71 L-3.11 7.69 L-3.17 7.66 L-3.24 7.64 L-3.31 7.61 L-3.37 7.58 L-3.44 7.55 L-3.51 7.52 L-3.57 7.49 L-3.64 7.46 L-3.70 7.43 L-3.77 7.40 L-3.83 7.36 L-3.90 7.33 L-3.96 7.29 L-4.02 7.26 L-4.09 7.22 L-4.15 7.19 L-4.21 7.15 L-4.27 7.11 L-4.34 7.08 L-4.40 7.04 L-4.46 7.00 L-4.52 6.96 L-4.58 6.92 L-4.64 6.88 L-4.70 6.84 L-4.76 6.80 L-4.82 6.76 L-4.88 6.71 L-4.94 6.67 L-4.99 6.63 L-5.05 6.58 L-5.10 6.53 L-5.16 6.49 L-5.21 6.44 L-5.26 6.39 L-5.31 6.33 L-5.36 6.27 L-5.40 6.21 L-5.43 6.14 L-5.46 6.06 L-5.46 5.96 L-5.45 5.85 L-5.42 5.71 L-5.37 5.56 L-5.29 5.38 L-5.20 5.20 L-5.10 5.01 L-5.02 4.84 L-4.95 4.70 L-4.90 4.57 L-4.88 4.47 L-4.87 4.38 L-4.87 4.31 L-4.88 4.24 L-4.90 4.19 L-4.93 4.14 L-4.96 4.09 L-4.99 4.04 L-5.02 3.99 L-5.05 3.95 L-5.08 3.90 L-5.11 3.85 L-5.15 3.81 L-5.18 3.76 L-5.21 3.72 L-5.24 3.67 L-5.28 3.63 L-5.31 3.58 L-5.34 3.53 L-5.37 3.49 L-5.40 3.44 L-5.43 3.39 L-5.46 3.34 L-5.49 3.30 L-5.51 3.25 L-5.54 3.20 L-5.57 3.15 L-5.60 3.10 L-5.62 3.05 L-5.65 3.00 L-5.68 2.96 L-5.70 2.91 L-5.73 2.86 L-5.75 2.81 L-5.78 2.76 L-5.80 2.71 L-5.83 2.65 L-5.85 2.60 L-5.87 2.55 L-5.90 2.50 L-5.92 2.45 L-5.94 2.40 L-5.97 2.35 L-5.99 2.30 L-6.02 2.25 L-6.05 2.20 L-6.08 2.15 L-6.12 2.11 L-6.17 2.06 L-6.23 2.02 L-6.31 1.99 L-6.41 1.96 L-6.54 1.94 L-6.70 1.92 L-6.89 1.91 L-7.10 1.90 L-7.31 1.89 L-7.50 1.87 L-7.66 1.84 L-7.79 1.80 L-7.90 1.75 L-7.97 1.70 L-8.03 1.63 L-8.08 1.57 L-8.11 1.50 L-8.14 1.44 L-8.16 1.37 L-8.18 1.30 L-8.20 1.23 L-8.21 1.15 L-8.22 1.08 L-8.23 1.01 L-8.24 0.94 L-8.25 0.87 L-8.26 0.80 L-8.27 0.72 L-8.27 0.65 L-8.28 0.58 L-8.28 0.51 L-8.29 0.43 L-8.29 0.36 L-8.29 0.29 L-8.30 0.22 L-8.30 0.14 L-8.30 0.07 L-8.30 0.00 L-8.30 -0.07 L-8.30 -0.14 L-8.30 -0.22 L-8.29 -0.29 L-8.29 -0.36 L-8.29 -0.43 L-8.28 -0.51 L-8.28 -0.58 L-8.27 -0.65 L-8.27 -0.72 L-8.26 -0.80 L-8.25 -0.87 L-8.24 -0.94 L-8.23 -1.01 L-8.22 -1.08 L-8.21 -1.15 L-8.20 -1.23 L-8.18 -1.30 L-8.16 -1.37 L-8.14 -1.44 L-8.11 -1.50 L-8.08 -1.57 L-8.03 -1.63 L-7.97 -1.70 L-7.90 -1.75 L-7.79 -1.80 L-7.66 -1.84 L-7.50 -1.87 L-7.31 -1.89 L-7.10 -1.90 L-6.89 -1.91 L-6.70 -1.92 L-6.54 -1.94 L-6.41 -1.96 L-6.31 -1.99 L-6.23 -2.02 L-6.17 -2.06 L-6.12 -2.11 L-6.08 -2.15 L-6.05 -2.20 L-6.02 -2.25 L-5.99 -2.30 L-5.97 -2.35 L-5.94 -2.40 L-5.92 -2.45 L-5.90 -2.50 L-5.87 -2.55 L-5.85 -2.60 L-5.83 -2.65 L-5.80 -2.71 L-5.78 -2.76 L-5.75 -2.81 L-5.73 -2.86 L-5.70 -2.91 L-5.68 -2.96 L-5.65 -3.00 L-5.62 -3.05 L-5.60 -3.10 L-5.57 -3.15 L-5.54 -3.20 L-5.51 -3.25 L-5.49 -3.30 L-5.46 -3.34 L-5.43 -3.39 L-5.40 -3.44 L-5.37 -3.49 L-5.34 -3.53 L-5.31 -3.58 L-5.28 -3.63 L-5.24 -3.67 L-5.21 -3.72 L-5.18 -3.76 L-5.15 -3.81 L-5.11 -3.85 L-5.08 -3.90 L-5.05 -3.95 L-5.02 -3.99 L-4.99 -4.04 L-4.96 -4.09 L-4.93 -4.14 L-4.90 -4.19 L-4.88 -4.24 L-4.87 -4.31 L-4.87 -4.38 L-4.88 -4.47 L-4.90 -4.57 L-4.95 -4.70 L-5.02 -4.84 L-5.10 -5.01 L-5.20 -5.20 L-5.29 -5.38 L-5.37 -5.56 L-5.42 -5.71 L-5.45 -5.85 L-5.46 -5.96 L-5.46 -6.06 L-5.43 -6.14 L-5.40 -6.21 L-5.36 -6.27 L-5.31 -6.33 L-5.26 -6.39 L-5.21 -6.44 L-5.16 -6.49 L-5.10 -6.53 L-5.05 -6.58 L-4.99 -6.63 L-4.94 -6.67 L-4.88 -6.71 L-4.82 -6.76 L-4.76 -6.80 L-4.70 -6.84 L-4.64 -6.88 L-4.58 -6.92 L-4.52 -6.96 L-4.46 -7.00 L-4.40 -7.04 L-4.34 -7.08 L-4.27 -7.11 L-4.21 -7.15 L-4.15 -7.19 L-4.09 -7.22 L-4.02 -7.26 L-3.96 -7.29 L-3.90 -7.33 L-3.83 -7.36 L-3.77 -7.40 L-3.70 -7.43 L-3.64 -7.46 L-3.57 -7.49 L-3.51 -7.52 L-3.44 -7.55 L-3.37 -7.58 L-3.31 -7.61 L-3.24 -7.64 L-3.17 -7.66 L-3.11 -7.69 L-3.04 -7.71 L-2.97 -7.73 L-2.90 -7.75 L-2.83 -7.77 L-2.75 -7.78 L-2.68 -7.78 L-2.60 -7.77 L-2.52 -7.75 L-2.43 -7.71 L-2.34 -7.65 L-2.24 -7.55 L-2.13 -7.43 L-2.02 -7.27 L-1.90 -7.10 L-1.79 -6.93 L-1.69 -6.77 L-1.59 -6.63 L-1.51 -6.53 L-1.43 -6.46 L-1.36 -6.40 L-1.30 -6.37 L-1.23 -6.35 L-1.18 -6.34 L-1.12 -6.34 L-1.06 -6.34 L-1.00 -6.34 L-0.95 -6.34 L-0.89 -6.35 L-0.84 -6.35 L-0.78 -6.36 L-0.72 -6.36 L-0.67 -6.37 L-0.61 -6.37 L-0.56 -6.38 L-0.50 -6.38 L-0.45 -6.39 L-0.39 -6.39 L-0.33 -6.39 L-0.28 -6.39 L-0.22 -6.40 L-0.17 -6.40 L-0.11 -6.40 L-0.06 -6.40 L-0.00 -6.40 L0.06 -6.40 L0.11 -6.40 L0.17 -6.40 L0.22 -6.40 L0.28 -6.39 L0.33 -6.39 L0.39 -6.39 L0.45 -6.39 L0.50 -6.38 L0.56 -6.38 L0.61 -6.37 L0.67 -6.37 L0.72 -6.36 L0.78 -6.36 L0.84 -6.35 L0.89 -6.35 L0.95 -6.34 L1.00 -6.34 L1.06 -6.34 L1.12 -6.34 L1.18 -6.34 L1.23 -6.35 L1.30 -6.37 L1.36 -6.40 L1.43 -6.46 L1.51 -6.53 L1.59 -6.63 L1.69 -6.77 L1.79 -6.93 L1.90 -7.10 L2.02 -7.27 L2.13 -7.43 L2.24 -7.55 L2.34 -7.65 L2.43 -7.71 L2.52 -7.75 L2.60 -7.77 L2.68 -7.78 L2.75 -7.78 L2.83 -7.77 L2.90 -7.75 L2.97 -7.73 L3.04 -7.71 L3.11 -7.69 L3.17 -7.66 L3.24 -7.64 L3.31 -7.61 L3.37 -7.58 L3.44 -7.55 L3.51 -7.52 L3.57 -7.49 L3.64 -7.46 L3.70 -7.43 L3.77 -7.40 L3.83 -7.36 L3.90 -7.33 L3.96 -7.29 L4.02 -7.26 L4.09 -7.22 L4.15 -7.19 L4.21 -7.15 L4.27 -7.11 L4.34 -7.08 L4.40 -7.04 L4.46 -7.00 L4.52 -6.96 L4.58 -6.92 L4.64 -6.88 L4.70 -6.84 L4.76 -6.80 L4.82 -6.76 L4.88 -6.71 L4.94 -6.67 L4.99 -6.63 L5.05 -6.58 L5.10 -6.53 L5.16 -6.49 L5.21 -6.44 L5.26 -6.39 L5.31 -6.33 L5.36 -6.27 L5.40 -6.21 L5.43 -6.14 L5.46 -6.06 L5.46 -5.96 L5.45 -5.85 L5.42 -5.71 L5.37 -5.56 L5.29 -5.38 L5.20 -5.20 L5.10 -5.01 L5.02 -4.84 L4.95 -4.70 L4.90 -4.57 L4.88 -4.47 L4.87 -4.38 L4.87 -4.31 L4.88 -4.24 L4.90 -4.19 L4.93 -4.14 L4.96 -4.09 L4.99 -4.04 L5.02 -3.99 L5.05 -3.95 L5.08 -3.90 L5.11 -3.85 L5.15 -3.81 L5.18 -3.76 L5.21 -3.72 L5.24 -3.67 L5.28 -3.63 L5.31 -3.58 L5.34 -3.53 L5.37 -3.49 L5.40 -3.44 L5.43 -3.39 L5.46 -3.34 L5.49 -3.30 L5.51 -3.25 L5.54 -3.20 L5.57 -3.15 L5.60 -3.10 L5.62 -3.05 L5.65 -3.00 L5.68 -2.96 L5.70 -2.91 L5.73 -2.86 L5.75 -2.81 L5.78 -2.76 L5.80 -2.71 L5.83 -2.65 L5.85 -2.60 L5.87 -2.55 L5.90 -2.50 L5.92 -2.45 L5.94 -2.40 L5.97 -2.35 L5.99 -2.30 L6.02 -2.25 L6.05 -2.20 L6.08 -2.15 L6.12 -2.11 L6.17 -2.06 L6.23 -2.02 L6.31 -1.99 L6.41 -1.96 L6.54 -1.94 L6.70 -1.92 L6.89 -1.91 L7.10 -1.90 L7.31 -1.89 L7.50 -1.87 L7.66 -1.84 L7.79 -1.80 L7.90 -1.75 L7.97 -1.70" fill="none" stroke="#5a6464" stroke-width="1.5" stroke-linejoin="round" stroke-dasharray="0 2.2 200"/>
<circle cx="0" cy="0" r="2.8" fill="none" stroke="#5a6464" stroke-width="1.4"/>
</svg>
<svg class="a" style="left:930px;top:2px" width="40" height="38" viewBox="-19.2 -18.6 40 38">
<circle cx="0" cy="0" r="8.15" fill="none" stroke="#5a6464" stroke-width="1.65" stroke-dasharray="4 1.5 100"/>
<path d="M-2.6 -1.6 Q-2.6 -4.7 0.3 -4.7 Q3.0 -4.7 3.0 -2.2 Q3.0 -0.6 1.4 0.3 Q0.1 1.1 0.1 2.6 V3.1" fill="none" stroke="#5a6464" stroke-width="1.4" stroke-linecap="butt"/>
<rect x="-0.6" y="4.2" width="1.4" height="1.2" fill="#5a6464"/>
</svg>
<div class="a" style="left:973px;top:9.3px;width:2px;height:24.6px;background:#9aa1a1"></div>
<svg class="a" style="left:986px;top:5px" width="32" height="32" viewBox="986 5 32 32">
<defs><clipPath id="av"><circle cx="1001.6" cy="20.6" r="13"/></clipPath><filter id="bl" x="-20%" y="-20%" width="140%" height="140%"><feGaussianBlur stdDeviation="0.45"/></filter></defs>
<circle cx="1001.6" cy="20.6" r="13.35" fill="#e8edef"/>
<g clip-path="url(#av)">
<rect x="986" y="5" width="32" height="32" fill="#8badbf"/><circle cx="996" cy="12" r="9" fill="#97b8c9" opacity="0.6"/>
<g filter="url(#bl)">
<path d="M993.5 37 Q994 30 1001.6 29.4 Q1009.2 30 1009.8 37 Z" fill="#dde3ee"/>
<path d="M996 30.4 L998.6 33.6 M1007.2 30.4 L1004.6 33.6" stroke="#56606a" stroke-width="0.9"/>
<rect x="999.4" y="24" width="4.6" height="5.8" fill="#cfa088"/>
<ellipse cx="1001.9" cy="19.8" rx="4.9" ry="6.6" fill="#e3b7a2"/>
<ellipse cx="1001.6" cy="15.6" rx="3.2" ry="2.2" fill="#e9c3ae"/>
<path d="M996.0 22 Q995.2 11.2 1002 10.6 Q1008.8 11 1008 22 L1007 21.5 Q1007.2 15 1003.8 13.4 Q999.6 13 997.2 16.4 L997 21.6 Z" fill="#6b4434"/>
<ellipse cx="999.5" cy="18.6" rx="0.75" ry="0.45" fill="#6a5a58"/><ellipse cx="1004.3" cy="18.6" rx="0.75" ry="0.45" fill="#6a5a58"/>
<path d="M999.8 23.0 Q1001.9 24.2 1004.0 23.0" fill="none" stroke="#f0dcd2" stroke-width="0.8"/>
</g>
</g></svg>
</div></body></html>
